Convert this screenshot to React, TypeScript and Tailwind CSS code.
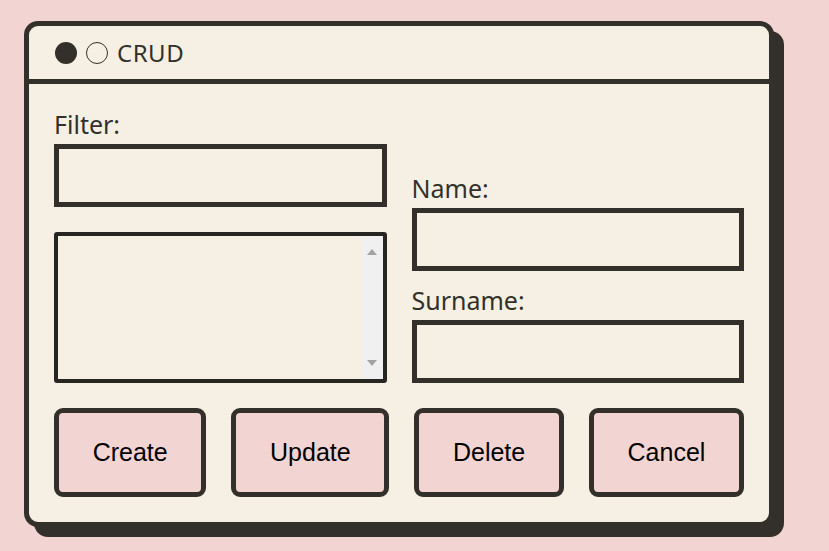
import React from 'react';

// CRUD ウィンドウ
const ink = 'border-[#33302b]';

function Field({ label, className = '' }: { label: string; className?: string }) {
  return (
    <div className={`flex flex-col ${className}`}>
      <label className="text-[25px] leading-[32px] text-[#33302b] mb-[4px]">{label}</label>
      <input
        className={`h-[63px] w-full border-[5px] ${ink} bg-transparent outline-none px-2 text-[20px]`}
        type="text"
      />
    </div>
  );
}

function ListBox() {
  return (
    <div className="h-[151px] mt-[25px] border-[4px] border-[#262522] rounded-[3px] flex overflow-hidden">
      <div className="flex-1" />
      <div className="w-[21px] bg-[#f0f0f0] flex flex-col items-center justify-between py-[13px]">
        <svg width="10" height="6" viewBox="0 0 10 6">
          <path d="M0 6 L5 0 L10 6 Z" fill="#a3a3a3" />
        </svg>
        <svg width="10" height="6" viewBox="0 0 10 6">
          <path d="M0 0 L5 6 L10 0 Z" fill="#a3a3a3" />
        </svg>
      </div>
    </div>
  );
}

export default function App() {
  const buttons = ['Create', 'Update', 'Delete', 'Cancel'];

  return (
    <div
      className="w-[829px] h-[551px] bg-[#f2d4d2] pt-[21px] pl-[24px] overflow-hidden"
      style={{ fontFamily: '"Noto Sans", "Open Sans", sans-serif' }}
    >
      <div className={`w-[750px] h-[506px] bg-[#f5f0e3] border-[5px] ${ink} rounded-[14px] shadow-[10px_10px_0_#33302b] flex flex-col`}>
        {/* タイトルバー */}
        <div className={`h-[58px] border-b-[5px] ${ink} flex items-center pl-[26px] gap-[9px]`}>
          <span className="w-[22px] h-[22px] rounded-full bg-[#33302b]" />
          <span className="w-[22px] h-[22px] rounded-full border border-[#33302b]" />
          <span className="text-[24px] leading-none text-[#33302b] tracking-[0.5px]">CRUD</span>
        </div>

        {/* 本体 */}
        <div className="flex-1 px-[25px] pt-[24px] pb-[25px] flex flex-col">
          <div className="grid grid-cols-2 gap-x-[25px]">
            <div className="flex flex-col">
              <Field label="Filter:" />
              <ListBox />
            </div>
            <div className="flex flex-col justify-end">
              <Field label="Name:" />
              <Field label="Surname:" className="mt-[13px]" />
            </div>
          </div>

          <div className="flex gap-[25px] mt-[25px]">
            {buttons.map(b => (
              <button
                key={b}
                className={`flex-auto h-[89px] border-[5px] ${ink} rounded-[9px] bg-[#f2d4d2] text-black text-[25px]`}
                style={{ fontFamily: '"Liberation Sans", Arial, sans-serif' }}
              >
                {b}
              </button>
            ))}
          </div>
        </div>
      </div>
    </div>
  );
}
